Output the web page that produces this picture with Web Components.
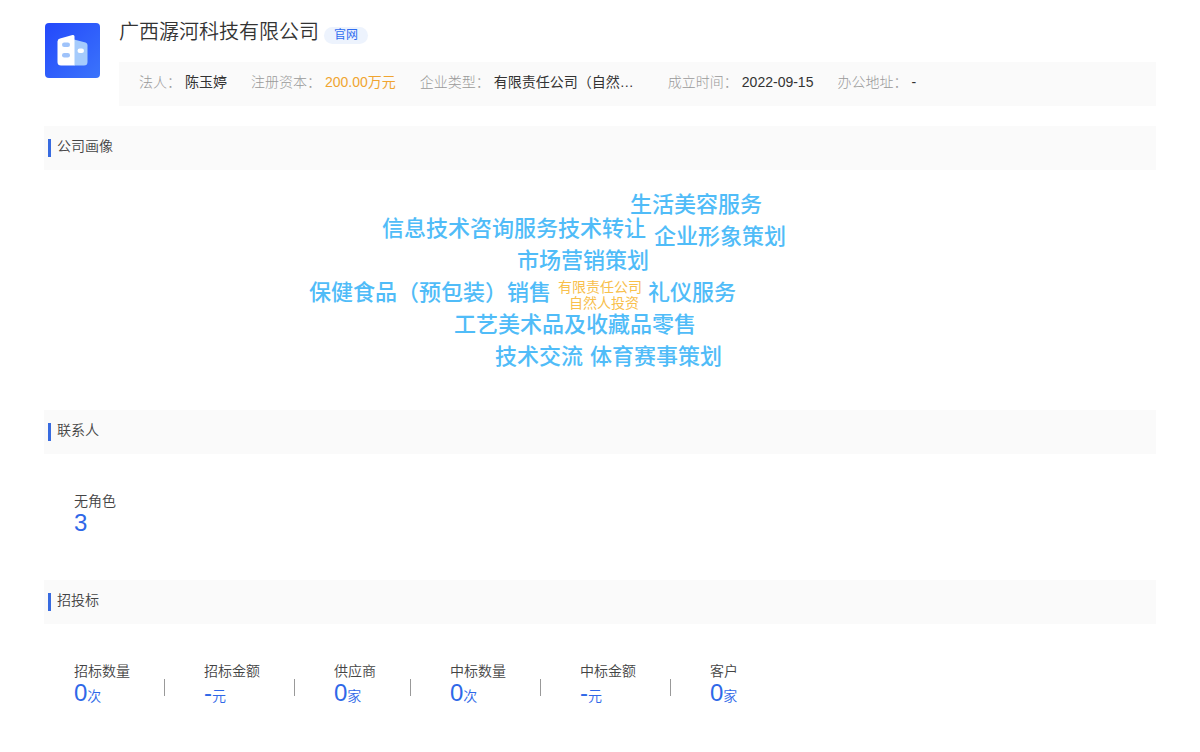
<!DOCTYPE html>
<html lang="zh-CN">
<head>
<meta charset="utf-8">
<meta name="viewport" content="width=device-width, initial-scale=1">
<title>广西潺河科技有限公司</title>
<style>
  body {
    margin: 0;
    background: #fff;
    color: #444;
    font: 14px/20px "Liberation Sans", "Noto Sans CJK SC", sans-serif;
  }
</style>
</head>
<body>
<company-page></company-page>

<template id="tpl-page">
  <style>
    :host { display: block; padding: 20px 44px 32px; }
    .stats { display: flex; flex-wrap: wrap; padding: 37px 30px 36px; min-height: 53px; }
  </style>
  <company-header name="广西潺河科技有限公司">
    <meta-item label="法人：">陈玉婷</meta-item>
    <meta-item label="注册资本：" tone="money">200.00万元</meta-item>
    <meta-item label="企业类型：" wide>有限责任公司（自然…</meta-item>
    <meta-item label="成立时间：">2022-09-15</meta-item>
    <meta-item label="办公地址：">-</meta-item>
  </company-header>
  <page-section heading="公司画像"><word-cloud></word-cloud></page-section>
  <page-section heading="联系人">
    <div class="stats"><stat-item label="无角色" value="3"></stat-item></div>
  </page-section>
  <page-section heading="招投标">
    <div class="stats">
      <stat-item label="招标数量" value="0" unit="次"></stat-item>
      <stat-item label="招标金额" value="-" unit="元"></stat-item>
      <stat-item label="供应商" value="0" unit="家"></stat-item>
      <stat-item label="中标数量" value="0" unit="次"></stat-item>
      <stat-item label="中标金额" value="-" unit="元"></stat-item>
      <stat-item label="客户" value="0" unit="家"></stat-item>
    </div>
  </page-section>
</template>

<template id="tpl-header">
  <style>
    :host { display: flex; gap: 18px; margin-bottom: 20px; }
    svg { flex: none; width: 57px; height: 57px; margin-top: 2px; }
    .main { flex: 1; min-width: 0; }
    .title { display: flex; align-items: flex-start; gap: 5px; height: 42px; }
    h1 { margin: 0; font-size: 20px; line-height: 24px; font-weight: 350; color: #333; }
    a {
      margin-top: 7px; padding: 0 10px; border-radius: 9px; background: #edf3fd;
      color: #2f6cf0; font-size: 12px; line-height: 17px; text-decoration: none;
    }
    .meta { display: flex; flex-wrap: wrap; gap: 0 24px; padding: 10px 20px 14px; background: #fafafa; }
  </style>
  <svg viewBox="0 0 57 57" aria-hidden="true">
    <defs>
      <linearGradient id="bg" x1="0" y1="0" x2="1" y2="1">
        <stop offset="0" stop-color="#2348fb"/><stop offset="1" stop-color="#3b74fb"/>
      </linearGradient>
    </defs>
    <rect x="1" y="1" width="55" height="55" rx="4" fill="url(#bg)"/>
    <path d="M30 17.500 41.500 20.500Q43.500 21 43.500 23V40Q43.500 43.500 40 43.500H30Z" fill="#a5cbfc"/>
    <path d="M16 16.500 28.500 13Q30.500 12.500 30.500 14.500V43.500H17Q13.500 43.500 13.500 40V19.500Q13.500 17.200 16 16.500Z" fill="#fff"/>
    <rect x="18" y="20.500" width="8" height="4.500" rx="2.200" fill="#9fc3fa"/>
    <rect x="18" y="31" width="8" height="4.500" rx="2.200" fill="#9fc3fa"/>
    <rect x="33.500" y="26.500" width="6.500" height="4.500" rx="2.200" fill="#fff"/>
  </svg>
  <div class="main">
    <div class="title"><h1></h1><a href="#">官网</a></div>
    <div class="meta"><slot></slot></div>
  </div>
</template>

<template id="tpl-meta">
  <style>
    :host { display: flex; gap: 4px; color: #333; }
    :host([tone="money"]) { color: #f0a531; }
    .label { color: #999; font-weight: 300; white-space: nowrap; }
    .value { white-space: nowrap; }
    :host([wide]) .value { min-width: 150px; }
  </style>
  <span class="label"></span><span class="value"><slot></slot></span>
</template>

<template id="tpl-section">
  <style>
    :host { display: block; }
    header { display: flex; align-items: center; gap: 6px; height: 44px; padding-left: 4px; background: #fafafa; }
    header::before { content: ""; width: 3px; height: 18px; background: #386be0; }
    h2 { margin: 0; padding-bottom: 4px; font-size: 14px; line-height: 20px; font-weight: 350; color: #444; }
  </style>
  <header><h2></h2></header>
  <slot></slot>
</template>

<template id="tpl-cloud">
  <style>
    :host { display: block; position: relative; height: 240px; overflow: hidden; }
    span {
      position: absolute; left: calc(50% + var(--x)); top: var(--y);
      font-size: 22px; line-height: 32px; font-weight: 500; color: #50bcf8; white-space: nowrap;
    }
    .minor { font-size: 14px; line-height: 16px; font-weight: 400; color: #f8c04c; }
  </style>
</template>

<template id="tpl-stat">
  <style>
    :host { display: flex; }
    :host(:not(:last-child))::after {
      content: ""; width: 1px; height: 17px; margin: 18px 39px 0 34px; background: #999;
    }
    dl { margin: 0; }
    dt { line-height: 20px; font-weight: 350; color: #444; white-space: nowrap; }
    dd { margin: 0; line-height: 24px; font-weight: 350; color: #2f68e8; white-space: nowrap; }
    b { font-size: 24px; font-weight: 400; }
  </style>
  <dl><dt></dt><dd><b></b><span></span></dd></dl>
</template>

<script>
  class Base extends HTMLElement {
    constructor(id) {
      super();
      this.attachShadow({ mode: "open" })
        .append(document.getElementById(id).content.cloneNode(true));
    }
    put(selector, name) {
      this.shadowRoot.querySelector(selector).textContent = this.getAttribute(name) || "";
    }
  }

  customElements.define("company-header", class extends Base {
    constructor() { super("tpl-header"); }
    connectedCallback() { this.put("h1", "name"); }
  });

  customElements.define("meta-item", class extends Base {
    constructor() { super("tpl-meta"); }
    connectedCallback() { this.put(".label", "label"); }
  });

  customElements.define("page-section", class extends Base {
    constructor() { super("tpl-section"); }
    connectedCallback() { this.put("h2", "heading"); }
  });

  customElements.define("stat-item", class extends Base {
    constructor() { super("tpl-stat"); }
    connectedCallback() {
      this.put("dt", "label");
      this.put("b", "value");
      this.put("dd span", "unit");
    }
  });

  // Each word: text, x from the cloud's centre, y from its top, minor tag
  const WORDS = [
    ["生活美容服务", 30, 19],
    ["信息技术咨询服务技术转让", -218, 43],
    ["企业形象策划", 54, 51],
    ["市场营销策划", -83, 75],
    ["保健食品（预包装）销售", -291, 107],
    ["有限责任公司", -42, 109, true],
    ["自然人投资", -31, 125, true],
    ["礼仪服务", 48, 107],
    ["工艺美术品及收藏品零售", -146, 139],
    ["技术交流", -105, 171],
    ["体育赛事策划", -10, 171]
  ];

  customElements.define("word-cloud", class extends Base {
    constructor() {
      super("tpl-cloud");
      for (const [text, x, y, minor] of WORDS) {
        const word = document.createElement("span");
        word.textContent = text;
        word.className = minor ? "minor" : "";
        word.style.setProperty("--x", x + "px");
        word.style.setProperty("--y", y + "px");
        this.shadowRoot.append(word);
      }
    }
  });

  customElements.define("company-page", class extends Base {
    constructor() { super("tpl-page"); }
  });
</script>
</body>
</html>
